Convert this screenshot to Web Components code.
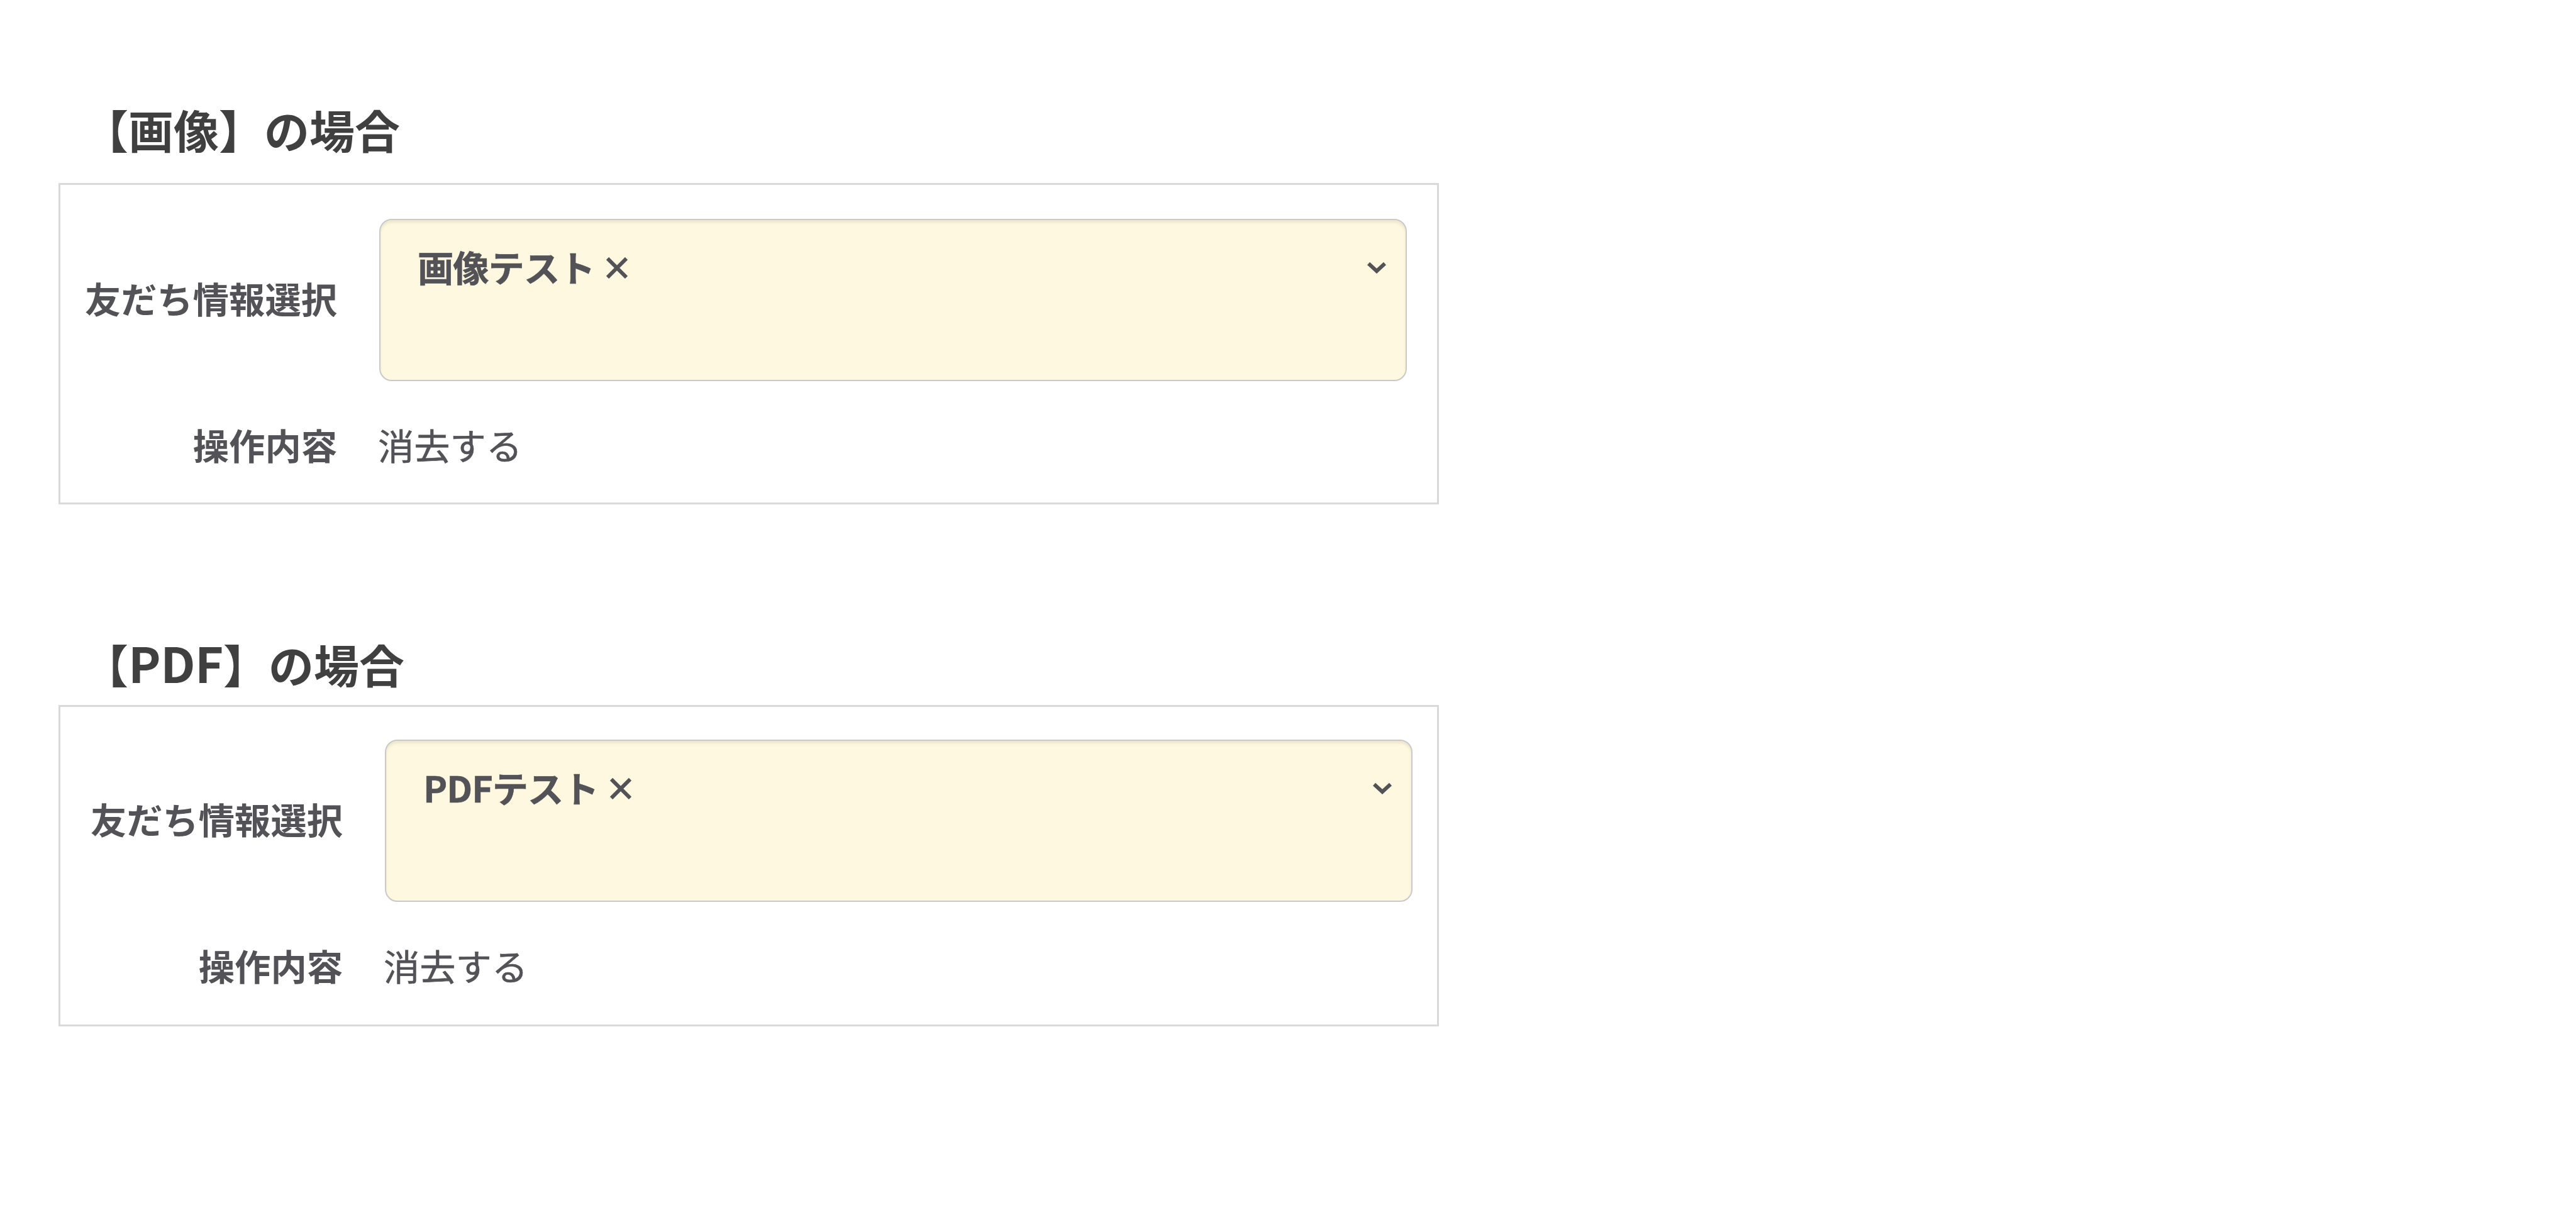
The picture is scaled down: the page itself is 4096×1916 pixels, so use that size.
<!DOCTYPE html>
<html lang="ja">
<head>
<meta charset="utf-8">
<title>友だち情報</title>
<style>
  body {
    background: #ffffff;
    color: #525257;
    font-family: 'Noto Sans CJK JP', sans-serif;
    margin: 0;
    overflow: hidden;
  }

  .latin {
    font-size: 77.5px;
    letter-spacing: -0.5px;
    line-height: 1;
  }
</style>
</head>
<body>

<info-case style="--title-top: 153px; --panel-gap: 34px;">
  <span slot="title">【画像】の場合</span>
  <info-row tall>
    <span slot="label">友だち情報選択</span>
    <tag-select>画像テスト</tag-select>
  </info-row>
  <info-row>
    <span slot="label">操作内容</span>
    消去する
  </info-row>
</info-case>

<info-case style="--title-top: 201px; --panel-gap: 14px; --inset: 51px; --inset-top: 52px;">
  <span slot="title">【<span class="latin">PDF</span>】の場合</span>
  <info-row tall>
    <span slot="label">友だち情報選択</span>
    <tag-select>PDFテスト</tag-select>
  </info-row>
  <info-row>
    <span slot="label">操作内容</span>
    消去する
  </info-row>
</info-case>

<script>
class InfoCase extends HTMLElement {
  constructor() {
    super();

    const template = document.createElement( 'template' )
    template.innerHTML = `
      <style>
        :host {
          display: block;
          padding-left: 93px;
          padding-top: var( --title-top );
        }

        h2 {
          color: #404040;
          font-size: 72px;
          font-weight: 700;
          height: 104px;
          line-height: 104px;
          margin: 0 0 var( --panel-gap ) 0;
          padding-left: 39px;
        }

        section {
          border: solid 3px #d9d9d9;
          box-sizing: border-box;
          display: flex;
          flex-direction: column;
          gap: 58px;
          height: 511px;
          padding: var( --inset-top, 54px ) 0 0 var( --inset, 42px );
          width: 2195px;
        }
      </style>
      <h2><slot name="title"></slot></h2>
      <section><slot></slot></section>
      `;

    // Root
    const shadowRoot = this.attachShadow( {mode: 'open'} );
    shadowRoot.appendChild( template.content.cloneNode( true ) );
  }
}

window.customElements.define( 'info-case', InfoCase );

class InfoRow extends HTMLElement {
  constructor() {
    super();

    const template = document.createElement( 'template' )
    template.innerHTML = `
      <style>
        :host {
          align-items: center;
          column-gap: 65px;
          display: grid;
          font-size: 57.3px;
          grid-template-columns: 398px 1634px;
          line-height: 86px;
        }

        :host( [tall] ) {
          column-gap: 67px;
        }

        .label {
          display: flex;
          font-weight: 700;
          justify-content: flex-end;
          white-space: nowrap;
        }

        :host( [tall] ) .label {
          padding-bottom: 7px;
        }

        .value {
          -webkit-text-stroke: 0.6px currentColor;
        }
      </style>
      <div class="label"><slot name="label"></slot></div>
      <div class="value"><slot></slot></div>
      `;

    // Root
    const shadowRoot = this.attachShadow( {mode: 'open'} );
    shadowRoot.appendChild( template.content.cloneNode( true ) );
  }
}

window.customElements.define( 'info-row', InfoRow );

class TagSelect extends HTMLElement {
  constructor() {
    super();

    const template = document.createElement( 'template' )
    template.innerHTML = `
      <style>
        :host {
          align-items: flex-start;
          background: #fff8e0;
          border: solid 2px #c9c9c9;
          border-radius: 20px;
          box-shadow: inset 0 4px 4px rgba( 0, 0, 0, 0.075 );
          box-sizing: border-box;
          display: flex;
          height: 258px;
          padding: 31px 31px 0 59px;
        }

        .tag {
          align-items: center;
          display: flex;
          flex-grow: 1;
          font-weight: 700;
          gap: 18px;
          height: 86px;
        }

        span {
          letter-spacing: -1px;
        }

        svg {
          display: block;
          fill: none;
          stroke: #525257;
          stroke-width: 6;
        }

        .close {
          margin-top: 3px;
        }

        .arrow {
          margin-top: 36px;
        }
      </style>
      <div class="tag">
        <span><slot></slot></span>
        <svg class="close" width="34" height="34" viewBox="0 0 34 34"><path d="M2 2L32 32M32 2L2 32"/></svg>
      </div>
      <svg class="arrow" width="30" height="18" viewBox="0 0 30 18"><path d="M2 2L15 14L28 2"/></svg>
      `;

    // Root
    const shadowRoot = this.attachShadow( {mode: 'open'} );
    shadowRoot.appendChild( template.content.cloneNode( true ) );
  }
}

window.customElements.define( 'tag-select', TagSelect );
</script>
</body>
</html>
